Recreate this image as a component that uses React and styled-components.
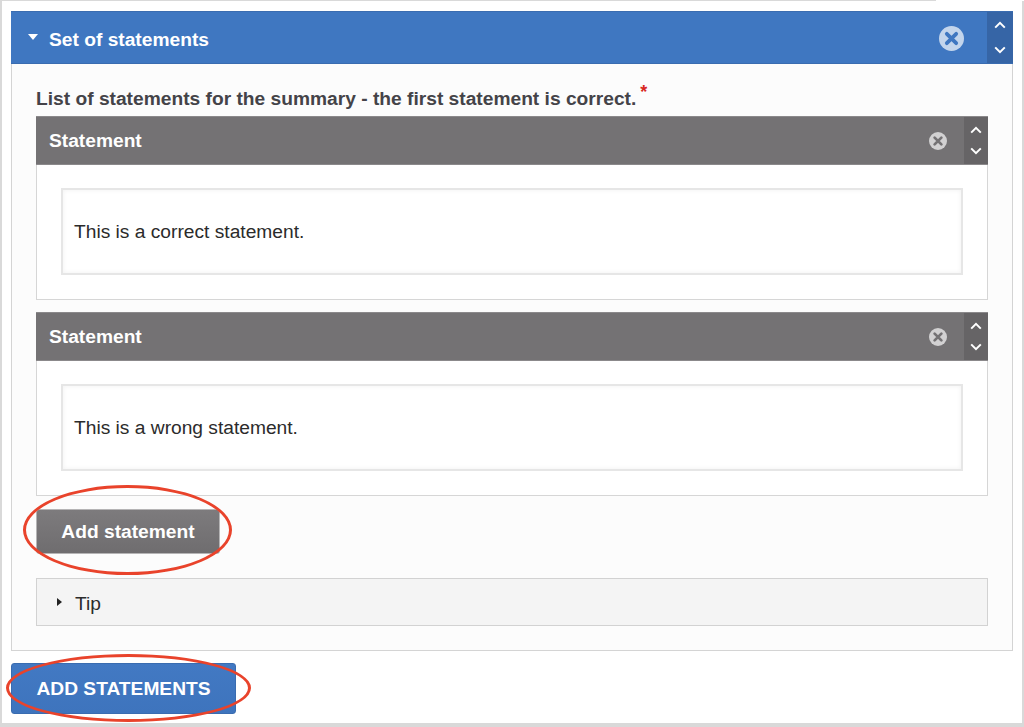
import React from "react"
import styled, { createGlobalStyle } from "styled-components"

const GlobalStyle = createGlobalStyle`
  html, body {
    margin: 0;
    padding: 0;
    background: #fff;
  }
  * {
    box-sizing: border-box;
  }
`

function RemoveIcon({ size, circle, cross }) {
  return (
    <svg width={size} height={size} viewBox="0 0 24 24">
      <circle cx="12" cy="12" r="12" fill={circle} />
      <path d="M7.5 7.5L16.5 16.5M16.5 7.5L7.5 16.5" stroke={cross} strokeWidth="3.6" strokeLinecap="round" />
    </svg>
  )
}

function Chevron({ up }) {
  return (
    <svg width="12" height="8" viewBox="0 0 12 8">
      <path d={up ? "M1.2 6.6L6 1.8L10.8 6.6" : "M1.2 1.4L6 6.2L10.8 1.4"} fill="none" stroke="#fff" strokeWidth="2" />
    </svg>
  )
}

function Statement({ text }) {
  return (
    <StatementCard>
      <StatementHeader>
        <StatementTitle>Statement</StatementTitle>
        <RemoveSlot>
          <RemoveIcon size={18} circle="#d2d1d2" cross="#747274" />
        </RemoveSlot>
        <Handle $color="#666466" $width={24}>
          <Chevron up />
          <Chevron />
        </Handle>
      </StatementHeader>
      <StatementBody>
        <TextBox>{text}</TextBox>
      </StatementBody>
    </StatementCard>
  )
}

export default function App() {
  return (
    <>
      <GlobalStyle />
      <Page>
        <TopNotch />
        <Panel>
          <PanelHeader>
            <Caret />
            <PanelTitle>Set of statements</PanelTitle>
            <PanelRemove>
              <RemoveIcon size={25} circle="#c3d5ec" cross="#3f77c1" />
            </PanelRemove>
            <Handle $color="#3665a6" $width={26}>
              <Chevron up />
              <Chevron />
            </Handle>
          </PanelHeader>
          <PanelBody>
            <FieldLabel>
              List of statements for the summary - the first statement is correct.
              <Required>*</Required>
            </FieldLabel>
            <StatementList>
              <Statement text="This is a correct statement." />
              <Statement text="This is a wrong statement." />
            </StatementList>
            <AddRow>
              <AddStatementButton>Add statement</AddStatementButton>
              <AddStatementMark />
            </AddRow>
            <Tip>
              <TipCaret />
              <TipLabel>Tip</TipLabel>
            </Tip>
          </PanelBody>
        </Panel>
        <SubmitRow>
          <SubmitButton>ADD STATEMENTS</SubmitButton>
          <SubmitMark />
        </SubmitRow>
      </Page>
    </>
  )
}

const Page = styled.div`
  position: relative;
  width: 1024px;
  height: 727px;
  padding: 10px 9px 0 9px;
  border-top: 1px solid #d9d9d9;
  border-left: 2px solid #d9d9d9;
  border-right: 2px solid #d9d9d9;
  border-bottom: 4px solid #d9d9d9;
  font-family: "Liberation Sans", Arial, sans-serif;
`

const TopNotch = styled.div`
  position: absolute;
  top: -1px;
  right: -2px;
  width: 88px;
  height: 1px;
  background: #fff;
`

const Panel = styled.section`
  width: 1002px;
  height: 640px;
  background: #fcfcfc;
  border: 1px solid #d4d4d4;
  border-top: 0;
`

const PanelHeader = styled.header`
  display: flex;
  align-items: stretch;
  height: 53px;
  margin: 0 -1px;
  background: #3f77c1;
  border-top: 1px solid #3a6cb0;
  border-bottom: 1px solid #3a6cb0;
  color: #fff;
`

const Caret = styled.span`
  align-self: center;
  width: 0;
  height: 0;
  margin-left: 17px;
  margin-top: -2px;
  border-left: 5.5px solid transparent;
  border-right: 5.5px solid transparent;
  border-top: 6px solid #fff;
`

const PanelTitle = styled.h2`
  flex: 1;
  margin: 0 0 0 11px;
  font-size: 19.2px;
  font-weight: 700;
  line-height: 56px;
`

const PanelRemove = styled.span`
  display: flex;
  align-items: center;
  margin-right: 23px;
  margin-top: 2px;
`

const Handle = styled.div`
  display: flex;
  flex-direction: column;
  align-items: center;
  justify-content: space-between;
  width: ${(p) => p.$width}px;
  padding: 9px 0 9px;
  background: ${(p) => p.$color};
`

const PanelBody = styled.div`
  padding: 0 24px 0 24px;
`

const FieldLabel = styled.div`
  position: relative;
  height: 52px;
  padding-top: 24px;
  font-size: 19.2px;
  font-weight: 700;
  line-height: 22px;
  color: #444348;
  white-space: nowrap;
`

const Required = styled.span`
  position: relative;
  top: -7px;
  margin-left: 4px;
  font-size: 18px;
  font-weight: 700;
  line-height: 1;
  color: #d8281f;
`

const StatementList = styled.div`
  display: flex;
  flex-direction: column;
  gap: 12px;
`

const StatementCard = styled.article`
  width: 952px;
  height: 184px;
  background: #fff;
  border: 1px solid #d6d6d6;
  border-top: 0;
`

const StatementHeader = styled.header`
  display: flex;
  align-items: stretch;
  height: 49px;
  margin: 0 -1px;
  background: #747274;
  border-top: 1px solid #8b898b;
  border-bottom: 1px solid #8b898b;
  color: #fff;
`

const StatementTitle = styled.h3`
  flex: 1;
  margin: 0 0 0 13px;
  font-size: 19.2px;
  font-weight: 700;
  line-height: 47px;
`

const RemoveSlot = styled.span`
  display: flex;
  align-items: center;
  margin-right: 17px;
`

const StatementBody = styled.div`
  padding: 23px 24px 24px;
`

const TextBox = styled.div`
  height: 87px;
  padding-left: 11px;
  background: #fff;
  border: 2px solid #e6e6e6;
  box-shadow: inset 0 0 5px rgba(0, 0, 0, 0.06);
  font-size: 19.2px;
  line-height: 83px;
  color: #2b2b2b;
`

const AddRow = styled.div`
  position: relative;
  margin-top: 13px;
  height: 45px;
`

const AddStatementButton = styled.button`
  display: block;
  width: 184px;
  height: 45px;
  padding: 0;
  background: linear-gradient(#7d7b7d, #6f6d6f);
  border: 1px solid #b5b4b5;
  border-radius: 3px;
  font-family: inherit;
  font-size: 19.2px;
  font-weight: 700;
  color: #fff;
`

const AddStatementMark = styled.div`
  position: absolute;
  left: -13px;
  top: -24px;
  width: 209px;
  height: 90px;
  border: 3px solid #e9432b;
  border-radius: 50%;
  pointer-events: none;
`

const Tip = styled.div`
  display: flex;
  align-items: center;
  width: 952px;
  height: 48px;
  margin-top: 24px;
  padding-left: 20px;
  background: #f4f4f4;
  border: 1px solid #d2d2d2;
  color: #2b2b2b;
`

const TipCaret = styled.span`
  width: 0;
  height: 0;
  margin-right: 13px;
  margin-top: -1px;
  border-top: 4.5px solid transparent;
  border-bottom: 4.5px solid transparent;
  border-left: 5px solid #222;
`

const TipLabel = styled.span`
  padding-top: 4px;
  font-size: 19.2px;
`

const SubmitRow = styled.div`
  position: relative;
  margin-top: 12px;
  height: 51px;
`

const SubmitButton = styled.button`
  display: block;
  width: 225px;
  height: 51px;
  padding: 0;
  background: linear-gradient(#4279c3, #3e74bd);
  border: 1px solid #3a6cb0;
  border-radius: 3px;
  font-family: inherit;
  font-size: 19.2px;
  font-weight: 700;
  color: #fff;
`

const SubmitMark = styled.div`
  position: absolute;
  left: -5px;
  top: -9px;
  width: 245px;
  height: 68px;
  border: 3px solid #e9432b;
  border-radius: 50%;
  pointer-events: none;
`
